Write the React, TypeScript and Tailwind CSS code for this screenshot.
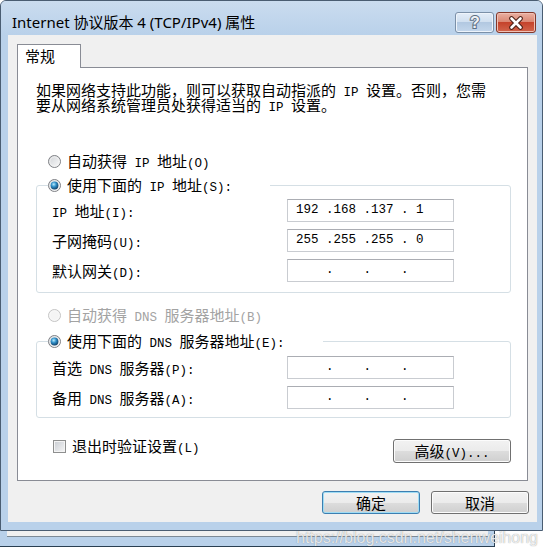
import React from 'react'

const ASCII = /^[\x20-\x7e]+$/

// SimSun-like mix: CJK in Noto, half-width runs in a mono face 7.5px wide
function Mix({ text }: { text: string }) {
  const parts = text.split(/([\x20-\x7e]+)/)
  return (
    <span className="whitespace-pre">
      {parts.map((p, i) =>
        ASCII.test(p) ? (
          <span key={i} className="font-['Liberation_Mono',monospace] text-[12.5px] leading-none">{p}</span>
        ) : (
          p
        )
      )}
    </span>
  )
}

function Radio({ checked = false, disabled = false }: { checked?: boolean; disabled?: boolean }) {
  return (
    <svg width="13" height="13" viewBox="0 0 13 13" className="shrink-0">
      <defs>
        <linearGradient id="rbg" x1="0" y1="0" x2="1" y2="1">
          <stop offset="0" stopColor="#cfd2d6" />
          <stop offset="1" stopColor="#fbfbfb" />
        </linearGradient>
        <radialGradient id="rdot" cx="0.4" cy="0.35" r="0.7">
          <stop offset="0" stopColor="#b8ecff" />
          <stop offset="0.45" stopColor="#2f8fc8" />
          <stop offset="1" stopColor="#0f3a60" />
        </radialGradient>
      </defs>
      <circle
        cx="6.5"
        cy="6.5"
        r="6"
        fill={disabled ? '#f4f4f4' : 'url(#rbg)'}
        stroke={disabled ? '#c4c4c4' : '#7f8185'}
        strokeWidth="1"
      />
      <circle cx="6.5" cy="6.5" r="4.6" fill="none" stroke={disabled ? '#f7f7f7' : '#f2f2f2'} strokeWidth="0.8" />
      {checked && <circle cx="6.5" cy="6.5" r="3.9" fill="url(#rdot)" />}
    </svg>
  )
}

function Checkbox() {
  return (
    <div className="w-[13px] h-[13px] shrink-0 border border-[#8e8f8f] bg-[linear-gradient(135deg,#c9cdd3,#f6f6f6)] shadow-[inset_0_0_0_1px_#f4f4f4]" />
  )
}

function IpBox({ value }: { value: string }) {
  return (
    <div className="w-[167px] h-[23px] border border-[#c9ccd1] border-t-[#abadb3] bg-white pl-[8px] flex items-center">
      <span className="whitespace-pre font-['Liberation_Mono',monospace] text-[12.5px] leading-[21px]">{value}</span>
    </div>
  )
}

const emptyIp = '    .    .    .'

function Row({ label, value }: { label: string; value: string }) {
  return (
    <div className="flex items-center justify-between h-[23px]">
      <span className="text-[15px] leading-[20px]">
        <Mix text={label} />
      </span>
      <IpBox value={value} />
    </div>
  )
}

function WinButton({ label, primary = false, mix = false, width }: { label: string; primary?: boolean; mix?: boolean; width: string }) {
  return (
    <div
      className={
        (primary
          ? 'border-[#3c7fb1] shadow-[inset_0_0_0_1px_#9fdcf4] '
          : 'border-[#707070] shadow-[inset_0_0_0_1px_#fcfcfc] ') +
        width +
        ' rounded-[3px] border bg-[linear-gradient(#f2f2f2,#ebebeb_50%,#dddddd_50%,#cfcfcf)] flex items-center justify-center text-[15px] leading-[20px]'
      }
    >
      {mix ? <Mix text={label} /> : label}
    </div>
  )
}

export default function App() {
  return (
    <div className="w-[546px] h-[547px] bg-white relative overflow-hidden text-black font-['Noto_Sans_CJK_SC',sans-serif]">
      {/* main dialog window */}
      <div className="w-[543px] h-[531px] flex flex-col rounded-t-[6px] border border-[#4a5d72] bg-[#b9d1ea]">
        <div className="h-[34px] shrink-0 flex items-start pt-[11px] pl-[11px] pr-[6px] rounded-t-[5px] bg-[linear-gradient(#cadcef,#b9d1ea)]">
          <div className="flex-1 text-[15px] leading-[21px] font-['Noto_Sans','Noto_Sans_CJK_SC',sans-serif] whitespace-pre">
            Internet 协议版本 4 (TCP/IPv4) 属性
          </div>
          <div className="flex gap-[2px]">
            <div className="w-[39px] h-[21px] rounded-[3px] border border-[#7b90a8] bg-[linear-gradient(#e3edf8,#cfdeef_50%,#b2c8e1_50%,#c4d7ec)] shadow-[inset_0_0_0_1px_#eef4fb] flex items-center justify-center">
              <svg width="14" height="17" viewBox="0 0 14 17">
                <text
                  x="7"
                  y="14"
                  textAnchor="middle"
                  fontFamily="Liberation Sans, sans-serif"
                  fontWeight="700"
                  fontSize="16"
                  fill="#eef1f5"
                  stroke="#5e6f83"
                  strokeWidth="2"
                  paintOrder="stroke"
                >
                  ?
                </text>
              </svg>
            </div>
            <div className="w-[40px] h-[21px] rounded-[3px] border border-[#83372a] bg-[linear-gradient(#eab0a2,#d98470_50%,#c5432c_50%,#d2654c)] shadow-[inset_0_0_0_1px_#f0c0b4] flex items-center justify-center">
              <svg width="16" height="14" viewBox="0 0 16 14">
                <path d="M3.5 2.5 L12.5 11.5 M12.5 2.5 L3.5 11.5" stroke="#4a1f16" strokeWidth="4.6" strokeLinecap="round" />
                <path d="M3.5 2.5 L12.5 11.5 M12.5 2.5 L3.5 11.5" stroke="#ffffff" strokeWidth="2.6" strokeLinecap="round" />
              </svg>
            </div>
          </div>
        </div>

        <div className="h-[487px] ml-[7px] mr-[5px] bg-[#f0f0f0] flex flex-col pt-[9px] pl-[9px]">
          <div className="w-[64px] h-[24px] -mb-px relative z-10 border-t border-x border-[#898c95] bg-white pl-[7px] text-[15px] leading-[22px]">
            常规
          </div>
          <div className="w-[511px] h-[414px] border border-[#898c95] bg-white flex flex-col">
            <div className="pl-[18px] pt-[14px] text-[15px]">
              <div className="h-[15px] leading-[15px]">
                <Mix text="如果网络支持此功能，则可以获取自动指派的 IP 设置。否则，您需" />
              </div>
              <div className="h-[15px] leading-[15px]">
                <Mix text="要从网络系统管理员处获得适当的 IP 设置。" />
              </div>
            </div>

            <div className="mt-[37px] h-[24px] flex items-center gap-[6px] pl-[30px] text-[15px]">
              <Radio />
              <Mix text="自动获得 IP 地址(O)" />
            </div>
            <fieldset className="ml-[18px] w-[475px] rounded-[3px] border border-[#d5dfe5] pt-[2px] pb-[10px] pl-[15px] pr-[56px]">
              <legend className="ml-[-4px] pr-[38px]">
                <div className="h-[24px] flex items-center gap-[6px] text-[15px]">
                  <Radio checked />
                  <Mix text="使用下面的 IP 地址(S):" />
                </div>
              </legend>
              <div className="flex flex-col gap-[7px]">
                <Row label="IP 地址(I):" value="192 .168 .137 . 1" />
                <Row label="子网掩码(U):" value="255 .255 .255 . 0" />
                <Row label="默认网关(D):" value={emptyIp} />
              </div>
            </fieldset>

            <div className="mt-[10px] h-[24px] flex items-center gap-[6px] pl-[30px] text-[15px] text-[#a3a3a3]">
              <Radio disabled />
              <Mix text="自动获得 DNS 服务器地址(B)" />
            </div>
            <fieldset className="mt-[2px] ml-[18px] w-[475px] rounded-[3px] border border-[#d5dfe5] pt-[3px] pb-[8px] pl-[15px] pr-[56px]">
              <legend className="ml-[-4px] pr-[38px]">
                <div className="h-[24px] flex items-center gap-[6px] text-[15px]">
                  <Radio checked />
                  <Mix text="使用下面的 DNS 服务器地址(E):" />
                </div>
              </legend>
              <div className="flex flex-col gap-[7px]">
                <Row label="首选 DNS 服务器(P):" value={emptyIp} />
                <Row label="备用 DNS 服务器(A):" value={emptyIp} />
              </div>
            </fieldset>

            <div className="mt-[21px] flex items-start justify-between pl-[35px] pr-[16px]">
              <div className="h-[14px] flex items-center gap-[6px] text-[15px]">
                <Checkbox />
                <Mix text="退出时验证设置(L)" />
              </div>
              <WinButton label="高级(V)..." mix width="w-[118px] h-[24px]" />
            </div>
          </div>

          <div className="mt-[10px] flex justify-end gap-[11px] pr-[8px]">
            <WinButton label="确定" primary width="w-[98px] h-[23px]" />
            <WinButton label="取消" width="w-[98px] h-[23px]" />
          </div>
        </div>
      </div>

      {/* edge of the parent window behind */}
      <div className="w-[495px] h-[16px] bg-[#b9d1ea] border-r border-b border-[#2a3f52] pl-[7px] pr-[6px]">
        <div className="h-[6px] bg-[#f0f0f0] border-b border-[#7d8a96]" />
      </div>

      {/* blog watermark */}
      <div className="absolute left-[296px] top-[528px] text-[16px] leading-[19px] font-['Liberation_Sans',sans-serif] text-white/80 [text-shadow:0_0_1px_rgba(90,90,90,0.7)]">
        https://blog.csdn.net/shenweihong
      </div>
    </div>
  )
}
